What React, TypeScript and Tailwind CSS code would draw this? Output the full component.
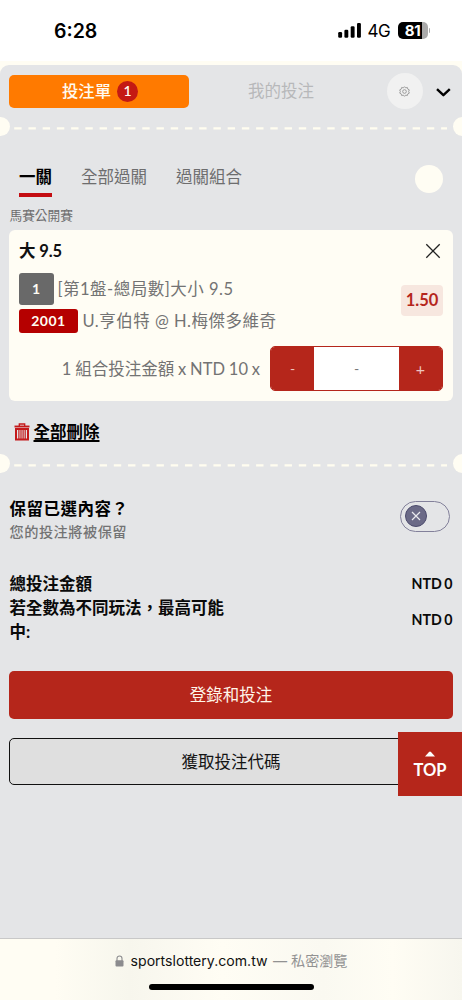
import React from "react";

const tc = "font-[Lato,'Noto_Sans_CJK_TC',sans-serif]";
const sys = "font-[Inter,'Noto_Sans_CJK_TC',sans-serif]";

function StatusBar() {
  return (
    <header className={`flex h-[61px] items-start bg-white pl-[54px] pr-[32px] ${sys}`}>
      <div className="pt-[17px] text-[19.5px] font-semibold leading-7 text-black">6:28</div>
      <div className="ml-auto mt-[22px] flex h-4 items-center">
        <svg width="24" height="16" viewBox="0 0 24 16" className="mr-[6px]">
          <rect x="0.2" y="10" width="3.9" height="5.8" rx="1.2" />
          <rect x="6.4" y="7.7" width="3.9" height="8.1" rx="1.2" />
          <rect x="12.7" y="4.3" width="3.9" height="11.5" rx="1.2" />
          <rect x="19" y="1" width="3.9" height="14.8" rx="1.2" />
        </svg>
        <span className="mr-[7px] mt-px w-[23px] whitespace-nowrap text-[17px] leading-4 tracking-[-0.5px] text-black">4G</span>
        <div className="flex h-[17px] w-[30px] items-center justify-center overflow-hidden rounded-[5px] bg-[linear-gradient(90deg,#000_80%,#aaa_80%)] text-[15px] font-bold leading-none tracking-[-0.3px] text-white">
          81
        </div>
        <div className="ml-px h-[5px] w-[1.5px] rounded-r-full bg-[#aaa]" />
      </div>
    </header>
  );
}

function Perforation() {
  return (
    <div className="flex h-[20px] items-center justify-between overflow-hidden">
      <div className="-ml-[10px] mb-[1px] h-[19px] w-[19.5px] shrink-0 rounded-full bg-[#fffdf3]" />
      <svg width="436" height="3" viewBox="0 0 436 3" className="mt-[2px] shrink-0">
        <line x1="1.2" y1="1.3" x2="434" y2="1.3" stroke="#fffdf0" strokeWidth="2.2" strokeDasharray="7.4 6.83" />
      </svg>
      <div className="-mr-[10px] mb-[1px] h-[19px] w-[19.5px] shrink-0 rounded-full bg-[#fffdf3]" />
    </div>
  );
}

function PanelHeader() {
  return (
    <div className="flex h-[52px] items-center pl-[9px] pr-[11px]">
      <button className="flex h-[33px] w-[180px] items-center justify-center gap-[6px] rounded-[5px] bg-[#ff7a00] pl-[2px] text-[16.4px] font-medium text-[#fffaf0]">
        投注單
        <span className="flex size-[21px] items-center justify-center rounded-full bg-[#c41913] text-[14px] font-semibold leading-none">1</span>
      </button>
      <span className="ml-[59px] text-[16.5px] text-[#b7b8ba]">我的投注</span>
      <span className="ml-[72.5px] flex size-[36px] items-center justify-center rounded-full bg-[#f1f1f1]">
        <svg width="11" height="11" viewBox="0 0 24 24" fill="none" stroke="#8d8d8d" strokeWidth="1.8">
          <path d="M12 1.500L14.600 4.200L18.200 3.200L19.200 6.800L22.500 8.500L21 12L22.500 15.500L19.200 17.200L18.200 20.800L14.600 19.800L12 22.500L9.400 19.800L5.800 20.800L4.800 17.200L1.500 15.500L3 12L1.500 8.500L4.800 6.800L5.800 3.200L9.400 4.200Z" strokeLinejoin="round" />
          <circle cx="12" cy="12" r="4" />
        </svg>
      </span>
      <svg width="16" height="12" viewBox="0 0 16 12" className="ml-auto mt-px" fill="none" stroke="#000" strokeWidth="2.4">
        <path d="M2 3.2L8.4 9.2L14.8 3.2" strokeLinejoin="round" />
      </svg>
    </div>
  );
}

function Tabs() {
  return (
    <div className="flex h-[42px] items-start pl-[19px] pr-[19px] text-[16.5px] leading-[24px] text-[#6d6d6e]">
      <div className="h-[32px] border-b-[4px] border-[#c40d12] font-bold text-black">一關</div>
      <div className="ml-[29px]">全部過關</div>
      <div className="ml-[29px]">過關組合</div>
      <div className="ml-auto size-[28px] rounded-full bg-[#fffdf3]" />
    </div>
  );
}

function BetCard() {
  return (
    <section className="mx-[9px] h-[171px] rounded-[6px] bg-[#fffdf4] px-[10px] pt-[9px] text-[#737373]">
      <div className="flex h-[24px] items-center justify-between pr-[2px]">
        <span className="pt-px text-[16.5px] font-bold tracking-[-0.15px] text-[#101010]">大 9.5</span>
        <svg width="16" height="16" viewBox="0 0 16 16" stroke="#222" strokeWidth="1.3">
          <path d="M1.3 1.3l13.4 13.4M14.7 1.3L1.3 14.7" />
        </svg>
      </div>
      <div className="mt-[9.5px] flex h-[60px] items-center justify-between">
        <div className="flex flex-col gap-[4.5px] text-[16.5px] tracking-[0.5px]">
          <div className="flex h-[32px] items-center">
            <span className="flex h-[32px] w-[34.5px] items-center justify-center rounded-[3px] bg-[#696969] text-[14px] font-bold text-[#fffdf4]">1</span>
            <span className="ml-[4px] whitespace-nowrap pt-[2px]">[第1盤-總局數]大小 9.5</span>
          </div>
          <div className="flex h-[23.5px] items-center">
            <span className="flex h-[23.5px] w-[59px] items-center justify-center rounded-[3px] bg-[#b50000] text-[14px] font-bold text-[#fffdf4]">2001</span>
            <span className="ml-[4.500px] whitespace-nowrap pt-[2px]">U.亨伯特 @ H.梅傑多維奇</span>
          </div>
        </div>
        <span className="mb-[5px] flex h-[31px] w-[42px] items-center justify-center rounded-[4px] bg-[#f7e7df] text-[16.5px] font-bold text-[#b5261c]">1.50</span>
      </div>
      <div className="mt-[13.5px] flex h-[45px] items-center justify-end">
        <span className="mr-[10px] whitespace-nowrap pt-[2px] text-[16.5px] [word-spacing:-0.4px]">1 組合投注金額 x NTD 10 x</span>
        <div className="flex h-[45px] w-[173px] overflow-hidden rounded-[5px] border border-[#b5261b] text-[14px]">
          <button className="w-[43px] bg-[#b5261b] text-[#edc5c0]">-</button>
          <span className="flex flex-1 items-center justify-center bg-white text-[#777]">-</span>
          <button className="w-[43px] bg-[#b5261b] text-[16px] text-[#edc5c0]">+</button>
        </div>
      </div>
    </section>
  );
}

function DeleteAll() {
  return (
    <div className="flex h-[24px] items-center pl-[13.5px]">
      <svg width="16" height="18" viewBox="0 0 16 18" fill="none" stroke="#c4191b">
        <path d="M0.500 3.500h15" strokeWidth="1.9" />
        <path d="M5.300 3V1h5.400v2" strokeWidth="1.3" />
        <path d="M2 6h12v10.600H2z" strokeWidth="2" />
        <path d="M4.900 7v9M7 7v9M9.100 7v9M11.200 7v9" strokeWidth="1.2" />
      </svg>
      <span className="ml-[4px] text-[16.5px] font-bold leading-6 text-black underline decoration-[1.5px] underline-offset-[2px]">全部刪除</span>
    </div>
  );
}

function KeepRow() {
  return (
    <div className="flex h-[46px] items-center justify-between pl-[9.5px] pr-[12px]">
      <div>
        <div className="text-[16.5px] font-bold leading-[23px] tracking-[0.5px] text-black">保留已選內容？</div>
        <div className="text-[14.2px] font-medium leading-[21px] tracking-[0.5px] text-[#737374]">您的投注將被保留</div>
      </div>
      <div className="mt-[-8px] flex h-[31px] w-[50px] items-center rounded-full border-[1.5px] border-[#82809a] pl-[4px]">
        <span className="flex size-[22px] items-center justify-center rounded-full border border-[#4c4b6d] bg-[#6b6a87]">
          <svg width="10" height="10" viewBox="0 0 10 10" stroke="#e9e9ef" strokeWidth="1.2">
            <path d="M1 1l8 8M9 1L1 9" />
          </svg>
        </span>
      </div>
    </div>
  );
}

function Totals() {
  return (
    <div className="px-[9.5px] font-bold text-[#0a0a0a]">
      <div className="flex h-[24px] items-center justify-between">
        <span className="text-[16.5px] leading-6">總投注金額</span>
        <span className="text-[14.2px] [word-spacing:-1px]">NTD 0</span>
      </div>
      <div className="flex h-[48px] items-center justify-between">
        <span className="w-[230px] text-[16.5px] leading-6">若全數為不同玩法，最高可能中:</span>
        <span className="text-[14.2px] leading-6 [word-spacing:-1px]">NTD 0</span>
      </div>
    </div>
  );
}

function Actions() {
  return (
    <div className="relative mt-[27px] flex flex-col gap-[19px] px-[9px] text-[16.5px]">
      <button className="h-[48px] rounded-[5px] bg-[#b5261b] text-[#fff6ea]">登錄和投注</button>
      <button className="h-[47px] rounded-[5px] border border-[#111] bg-[#dfdfdf] pt-px text-[#141414]">獲取投注代碼</button>
      <button className="absolute right-0 top-[61px] flex h-[64px] w-[64px] flex-col items-center bg-[#b5261b] pt-[19px] text-[16.5px] font-bold text-white">
        <svg width="10" height="6" viewBox="0 0 10 6" fill="white">
          <path d="M0 5.500L4 1Q5 0 6 1L10 5.500z" />
        </svg>
        <span className="mt-[2px] leading-[23px]">TOP</span>
      </button>
    </div>
  );
}

function BrowserBar() {
  return (
    <footer className={`flex h-[62px] flex-col items-center border-t border-[#c8c8c8] bg-[linear-gradient(90deg,#fffdf3_0%,#fffdf3_12%,#f7f6ed_28%,#fffdf4_48%,#faf9f1_70%,#fffdf4_85%,#f7f6ee_100%)] pt-[12px] ${sys}`}>
      <div className="flex h-[20px] items-center whitespace-nowrap text-[14.1px] text-[#111]">
        <svg width="9" height="12" viewBox="0 0 9 12" className="mr-[7px]">
          <path d="M2 6V3.500a2.500 2.500 0 0 1 5 0V6" fill="none" stroke="#8b8b8e" strokeWidth="1.1" />
          <rect x="0.5" y="5.2" width="8" height="6.3" rx="1" fill="#8b8b8e" />
        </svg>
        <span>sportslottery.com.tw</span>
        <span className="ml-[5.5px] text-[#929292]">— 私密瀏覽</span>
      </div>
      <div className="mt-[13px] h-[6px] w-[165px] rounded-full bg-black" />
    </footer>
  );
}

export default function App() {
  return (
    <div className={`flex h-[1000px] w-[462px] flex-col overflow-hidden bg-[#fffdf3] ${tc}`}>
      <StatusBar />
      <main className="mt-[4px] flex-1 rounded-t-[9px] bg-[#e4e5e7]">
        <PanelHeader />
        <Perforation />
        <div className="h-[28px]" />
        <Tabs />
        <div className="h-[23px] pl-[9.5px] text-[12.7px] leading-[16px] text-[#6d6d6e]">馬賽公開賽</div>
        <BetCard />
        <div className="h-[19px]" />
        <DeleteAll />
        <div className="h-[10px]" />
        <Perforation />
        <div className="mt-[23px]">
          <KeepRow />
        </div>
        <div className="mt-[29px]">
          <Totals />
        </div>
        <Actions />
      </main>
      <BrowserBar />
    </div>
  );
}
